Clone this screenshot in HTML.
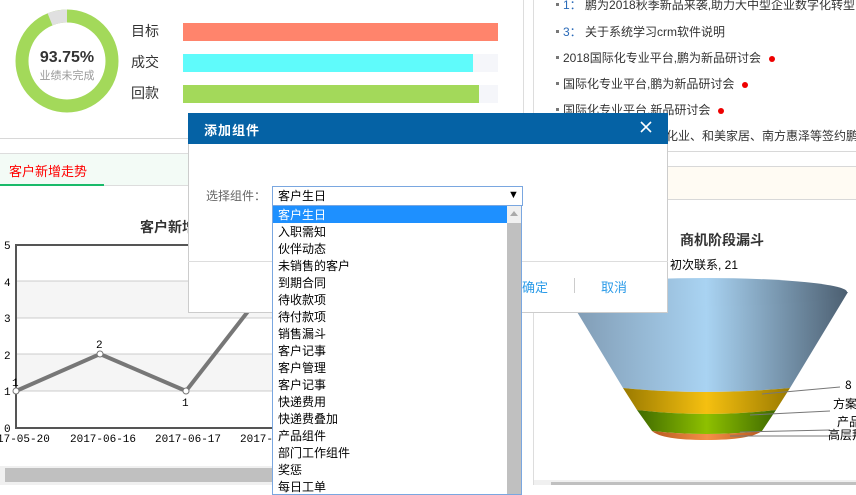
<!DOCTYPE html>
<html><head><meta charset="utf-8"><style>
*{margin:0;padding:0;box-sizing:border-box}
body{width:856px;height:485px;overflow:hidden;background:#fff;position:relative;font-family:"Liberation Sans","Noto Sans CJK SC",sans-serif;font-size:12px;color:#333}
.a{position:absolute}
.lbl{position:absolute;left:131px;font-size:14px;color:#333}
.bar{position:absolute;left:183px;width:315px;height:18px;background:#f5f6fa}
.li{position:absolute;left:556px;font-size:12px;color:#333;white-space:nowrap}
.li:before{content:"";position:absolute;left:0;top:7px;width:3px;height:3px;background:#777}
.li span.t{margin-left:7px}
.dot{display:inline-block;width:6px;height:6px;border-radius:50%;background:#e00;margin-left:8px;vertical-align:middle}
.opt{height:17px;line-height:17px;padding-left:5px;font-size:12px;color:#000;font-family:"Noto Sans CJK SC",sans-serif}
</style></head><body>
<!-- donut -->
<svg class="a" style="left:0;top:0" width="130" height="120">
<circle cx="67" cy="61" r="45" fill="none" stroke="#a3d95a" stroke-width="13"/>
<path d="M 50 19.3 A 45 45 0 0 1 67 16" fill="none" stroke="#e0e0e0" stroke-width="13"/>
<text x="67" y="62" text-anchor="middle" font-size="16" font-weight="bold" fill="#333" font-family="Liberation Sans">93.75%</text>
<text x="67" y="79" text-anchor="middle" font-size="11" fill="#999" font-family="Noto Sans CJK SC">业绩未完成</text>
</svg>
<div class="lbl" style="top:21px">目标</div>
<div class="lbl" style="top:52px">成交</div>
<div class="lbl" style="top:83px">回款</div>
<div class="bar" style="top:23px;background:#ff846c"></div>
<div class="bar" style="top:54px"><div style="width:290px;height:18px;background:#5ffbfb"></div></div>
<div class="bar" style="top:85px"><div style="width:296px;height:18px;background:#a3d95a"></div></div>

<!-- left panel -->
<div class="a" style="left:0;top:138px;width:200px;height:1px;background:#d8d8d8"></div>
<div class="a" style="left:0;top:153px;width:200px;height:33px;background:#f3fbf6;border-top:1px solid #ddd;border-bottom:1px solid #ddd"></div>
<div class="a" style="left:9px;top:161px;font-size:13px;color:#f00">客户新增走势</div>
<div class="a" style="left:0;top:184px;width:104px;height:2px;background:#1aba6a"></div>
<div class="a" style="left:140px;top:217px;font-size:14px;font-weight:bold;color:#333">客户新增走势</div>
<svg class="a" style="left:0;top:236px" width="280" height="215" font-family="Liberation Mono" font-size="11">
<rect x="16" y="45" width="264" height="37" fill="#f5f5f5"/>
<rect x="16" y="118" width="264" height="37" fill="#f5f5f5"/>
<g stroke="#ccc"><line x1="16" y1="45" x2="280" y2="45"/><line x1="16" y1="82" x2="280" y2="82"/><line x1="16" y1="118" x2="280" y2="118"/><line x1="16" y1="155" x2="280" y2="155"/></g>
<line x1="16" y1="9" x2="280" y2="9" stroke="#555" stroke-width="2"/>
<line x1="16" y1="8" x2="16" y2="193" stroke="#555" stroke-width="2"/>
<line x1="16" y1="192" x2="280" y2="192" stroke="#555" stroke-width="2"/>
<polyline points="16,155 100,118 186,155 260,60" fill="none" stroke="#777" stroke-width="4"/>
<g fill="#fff" stroke="#777"><circle cx="16" cy="155" r="3"/><circle cx="100" cy="118" r="3"/><circle cx="186" cy="155" r="3"/></g>
<g fill="#000"><text x="4" y="13">5</text><text x="4" y="50">4</text><text x="4" y="86">3</text><text x="4" y="123">2</text><text x="4" y="159">1</text><text x="4" y="196">0</text>
<text x="96" y="112">2</text><text x="182" y="170">1</text><text x="12" y="150">1</text>
<text x="-3" y="206">17-05-20</text><text x="70" y="206">2017-06-16</text><text x="155" y="206">2017-06-17</text><text x="240" y="206">2017-06</text></g>
</svg>
<div class="a" style="left:0;top:466px;width:280px;height:19px;background:#f0f0f0"></div>
<div class="a" style="left:5px;top:468px;width:275px;height:14px;background:#c0c0c0"></div>

<!-- right panel -->
<div class="a" style="left:523px;top:0;width:1px;height:140px;background:#ddd"></div>
<div class="a" style="left:533px;top:0;width:1px;height:485px;background:#ddd"></div>
<div class="li" style="top:-4px"><span class="t"><span style="color:#2a6ab8">1：</span> 鹏为2018秋季新品来袭,助力大中型企业数字化转型</span></div>
<div class="li" style="top:23px"><span class="t"><span style="color:#2a6ab8">3：</span> 关于系统学习crm软件说明</span></div>
<div class="li" style="top:49px"><span class="t">2018国际化专业平台,鹏为新品研讨会</span><span class="dot"></span></div>
<div class="li" style="top:75px"><span class="t">国际化专业平台,鹏为新品研讨会</span><span class="dot"></span></div>
<div class="li" style="top:101px"><span class="t">国际化专业平台,新品研讨会</span><span class="dot"></span></div>
<div class="a" style="left:666px;top:127px;font-size:12px;color:#333;white-space:nowrap">化业、和美家居、南方惠泽等签约鹏为</div>
<div class="a" style="left:534px;top:151px;width:322px;height:1px;background:#d8d8d8"></div>
<div class="a" style="left:534px;top:166px;width:322px;height:34px;background:#fffbf3;border-top:1px solid #d8d8d8;border-bottom:1px solid #d8d8d8"></div>
<div class="a" style="left:680px;top:230px;font-size:14px;font-weight:bold;color:#333">商机阶段漏斗</div>
<div class="a" style="left:670px;top:256px;font-size:12px;color:#000">初次联系, 21</div>
<svg class="a" style="left:540px;top:270px" width="316" height="180" font-family="Noto Sans CJK SC" font-size="12">
<defs>
<linearGradient id="gb" x1="0" x2="1"><stop offset="0" stop-color="#7e98b0"/><stop offset=".5" stop-color="#a9d3f2"/><stop offset="1" stop-color="#4c5f71"/></linearGradient>
<linearGradient id="gy" x1="0" x2="1"><stop offset="0" stop-color="#9a7a00"/><stop offset=".5" stop-color="#f5c010"/><stop offset="1" stop-color="#9a7a00"/></linearGradient>
<linearGradient id="gg" x1="0" x2="1"><stop offset="0" stop-color="#3f6a00"/><stop offset=".5" stop-color="#8ec000"/><stop offset="1" stop-color="#3f6a00"/></linearGradient>
<linearGradient id="go" x1="0" x2="1"><stop offset="0" stop-color="#b85a20"/><stop offset=".5" stop-color="#f59048"/><stop offset="1" stop-color="#b85a20"/></linearGradient>
</defs>
<path d="M25 22 L83 118 Q163 126 250 118 L308 22 Z" fill="url(#gb)"/>
<ellipse cx="166" cy="22" rx="141" ry="14" fill="url(#gb)"/>
<path d="M83 118 Q163 126 250 118 L236 140 Q166 148 97 140 Z" fill="url(#gy)"/>
<path d="M97 140 Q166 148 236 140 L222 161 Q166 167 112 161 Z" fill="url(#gg)"/>
<path d="M112 161 Q166 167 222 161 Q210 170 166 170 Q122 170 112 161 Z" fill="url(#go)"/>
<g stroke="#777" fill="none"><path d="M222 124 L300 117"/><path d="M210 145 L290 141"/><path d="M200 162 L290 160"/><path d="M190 166 L290 166"/></g>
<g fill="#000"><text x="305" y="119">8</text><text x="293" y="138">方案</text><text x="297" y="156">产品展</text><text x="288" y="169">高层拜访</text></g>
</svg>
<div class="a" style="left:534px;top:480px;width:322px;height:5px;background:#f0f0f0"></div>
<div class="a" style="left:551px;top:482px;width:305px;height:3px;background:#c0c0c0"></div>

<!-- dialog -->
<div class="a" style="left:188px;top:113px;width:480px;height:200px;background:#fff;border:1px solid #ccc"></div>
<div class="a" style="left:188px;top:113px;width:480px;height:31px;background:#0562a5"></div>
<div class="a" style="left:204px;top:120px;font-size:13px;font-weight:bold;color:#fff;letter-spacing:1px">添加组件</div>
<svg class="a" style="left:640px;top:121px" width="12" height="12"><path d="M1 1 L11 11 M11 1 L1 11" stroke="#fff" stroke-width="1.6"/></svg>
<div class="a" style="left:206px;top:187px;font-size:12px;color:#666">选择组件：</div>
<div class="a" style="left:272px;top:186px;width:251px;height:20px;border:1px solid #7aa7e0;background:#fff"></div>
<div class="a" style="left:278px;top:187px;font-size:12px;color:#000">客户生日</div>
<div class="a" style="left:508px;top:189px;font-size:11px;color:#000">▼</div>
<div class="a" style="left:188px;top:261px;width:480px;height:1px;background:#ddd"></div>
<div class="a" style="left:522px;top:277px;font-size:13px;color:#2b9be8">确定</div>
<div class="a" style="left:574px;top:278px;width:1px;height:15px;background:#ccc"></div>
<div class="a" style="left:601px;top:277px;font-size:13px;color:#2b9be8">取消</div>
<!-- dropdown -->
<div class="a" style="left:272px;top:205px;width:250px;height:290px;background:#fff;border:1px solid #7aa7e0;overflow:hidden">
<div style="position:absolute;left:0;top:0;width:234px">
<div class="opt" style="background:#1e90ff;color:#fff">客户生日</div>
<div class="opt">入职需知</div><div class="opt">伙伴动态</div><div class="opt">未销售的客户</div><div class="opt">到期合同</div><div class="opt">待收款项</div><div class="opt">待付款项</div><div class="opt">销售漏斗</div><div class="opt">客户记事</div><div class="opt">客户管理</div><div class="opt">客户记事</div><div class="opt">快递费用</div><div class="opt">快递费叠加</div><div class="opt">产品组件</div><div class="opt">部门工作组件</div><div class="opt">奖惩</div><div class="opt">每日工单</div>
</div>
<div style="position:absolute;left:234px;top:0;width:14px;height:290px;background:#f0f0f0"></div>
<div style="position:absolute;left:234px;top:17px;width:14px;height:280px;background:#c0c0c0"></div>
<div style="position:absolute;left:237px;top:5px;width:0;height:0;border-left:4px solid transparent;border-right:4px solid transparent;border-bottom:5px solid #aaa"></div>
</div>
</body></html>
